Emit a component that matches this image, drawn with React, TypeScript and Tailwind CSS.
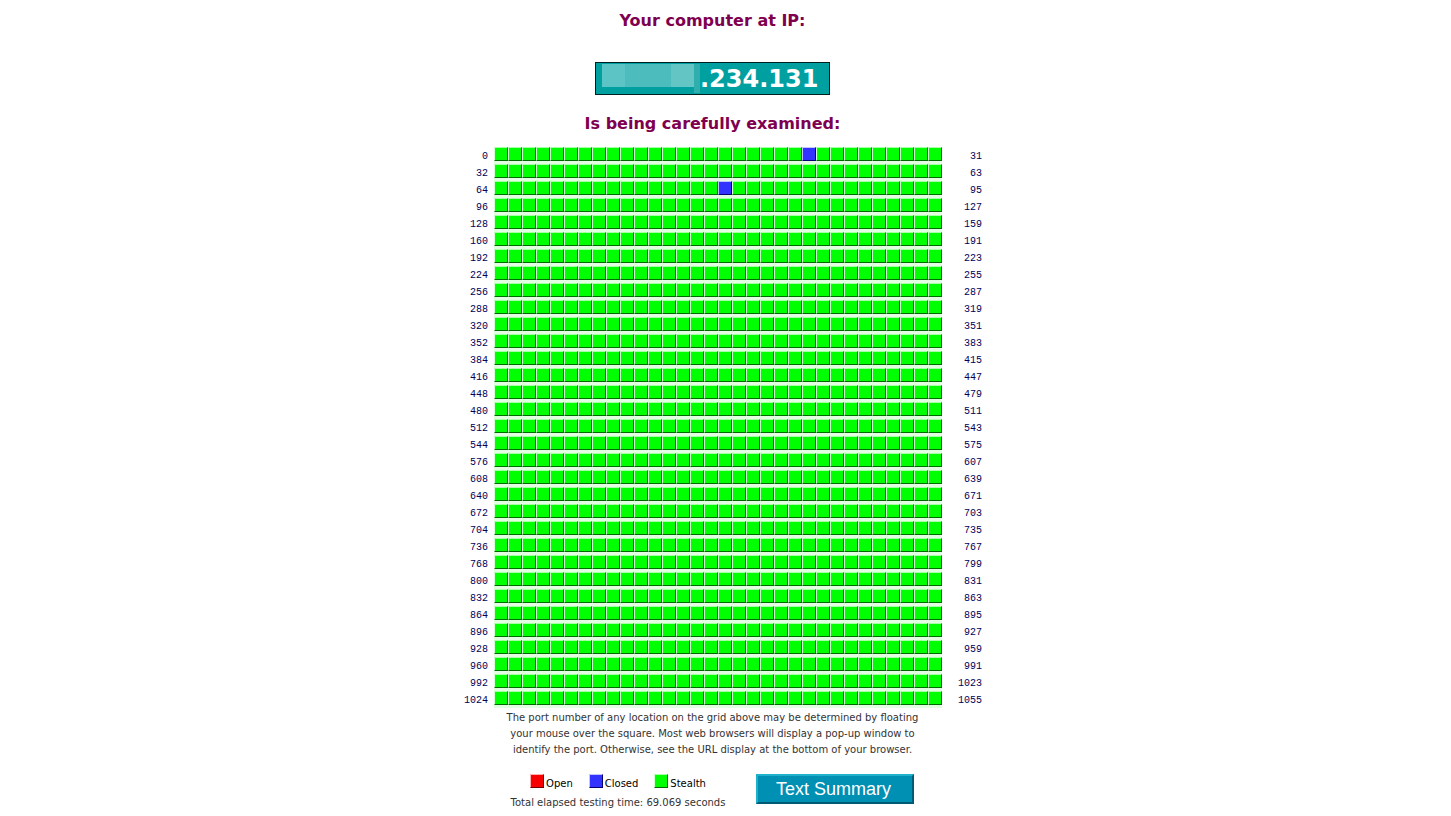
const COLUMNS = 32;
const ROWS = 33;
const CLOSED_PORTS = [22, 80];

type Status = "open" | "closed" | "stealth";

const SQUARE_STYLES: Record<Status, string> = {
  open: "bg-[#f60000] border-t-[#ffb0b0] border-l-[#ffb0b0] border-r-[#700000] border-b-[#700000]",
  closed: "bg-[#3333ff] border-t-[#c4c4ff] border-l-[#c4c4ff] border-r-[#000070] border-b-[#000070]",
  stealth: "bg-[#00ff00] border-t-[#a8ffa8] border-l-[#d4ffd4] border-r-[#006a00] border-b-[#006a00]",
};

const LEGEND: { status: Status; label: string }[] = [
  { status: "open", label: "Open" },
  { status: "closed", label: "Closed" },
  { status: "stealth", label: "Stealth" },
];

const rows = Array.from({ length: ROWS }, (_, r) =>
  Array.from({ length: COLUMNS }, (_, c) => r * COLUMNS + c)
);

function Square({ status }: { status: Status }) {
  return <span className={`block size-[14px] border ${SQUARE_STYLES[status]}`} />;
}

function PortGrid() {
  const labelCls = "p-0 text-right align-top font-normal";

  return (
    <table className="border-collapse font-['Liberation_Mono',monospace] text-[10px] text-[#000058]">
      <tbody>
        {rows.map((ports) => (
          <tr key={ports[0]} className="h-[17px]">
            <th scope="row" className={`${labelCls} w-[51px] pr-[6px]`}>
              <span className="block pt-[3px] leading-[14px]">{ports[0]}</span>
            </th>
            {ports.map((port) => {
              const status = CLOSED_PORTS.includes(port) ? "closed" : "stealth";
              return (
                <td key={port} className="bg-[#e2ffe2] p-0 align-top">
                  <a href={`#port-${port}`} title={`Port ${port}: ${status}`} className="block">
                    <Square status={status} />
                  </a>
                </td>
              );
            })}
            <td className={`${labelCls} w-[40px]`}>
              <span className="block pt-[3px] leading-[14px]">{ports[COLUMNS - 1]}</span>
            </td>
          </tr>
        ))}
      </tbody>
    </table>
  );
}

function AddressBox() {
  return (
    <div className="flex h-[33px] w-[235px] border border-[#002020] bg-[#00a0a0] pl-[6px]">
      <div className="mt-px flex h-[23px]">
        <span className="w-[23px] bg-[#5cc4c4]" />
        <span className="w-[46px] bg-[#4cbcbc]" />
        <span className="w-[23px] bg-[#64c6c4]" />
        <span className="h-[29px] w-[6px] bg-[#30aeae]" />
      </div>
      <p className="text-[24px] leading-[33px] font-bold text-white">.234.131</p>
    </div>
  );
}

export default function App() {
  return (
    <main className="flex flex-col items-center bg-white pr-[26px] font-['DejaVu_Sans',Verdana,sans-serif] text-[10px] text-[#333333]">
      <h1 className="pt-[10px] text-[16px] leading-[22px] font-bold text-[#800050]">
        Your computer at IP:
      </h1>
      <div className="pt-[30px]">
        <AddressBox />
      </div>
      <h2 className="pt-[18px] pb-[12px] text-[16px] leading-[22px] font-bold text-[#800050]">
        Is being carefully examined:
      </h2>

      <PortGrid />

      <p className="pt-[2px] text-center leading-[16px]">
        The port number of any location on the grid above may be determined by floating
        <br />
        your mouse over the square. Most web browsers will display a pop-up window to
        <br />
        identify the port. Otherwise, see the URL display at the bottom of your browser.
      </p>

      <div className="flex items-start gap-[31px] pt-[16px]">
        <div className="flex flex-col items-center">
          <ul className="flex gap-[16px] text-black">
            {LEGEND.map(({ status, label }) => (
              <li key={status} className="flex gap-[2px]">
                <Square status={status} />
                <span className="pt-[2px] leading-[16px]">{label}</span>
              </li>
            ))}
          </ul>
          <p className="leading-[22px]">Total elapsed testing time: 69.069 seconds</p>
        </div>
        <button
          type="button"
          className="h-[30px] w-[158px] border-2 border-t-[#20b0cc] border-r-[#005a74] border-b-[#005a74] border-l-[#20b0cc] bg-[#0090b4] pr-[4px] font-['Liberation_Sans',Arial,sans-serif] text-[18px] leading-[26px] text-white"
        >
          Text Summary
        </button>
      </div>
    </main>
  );
}
